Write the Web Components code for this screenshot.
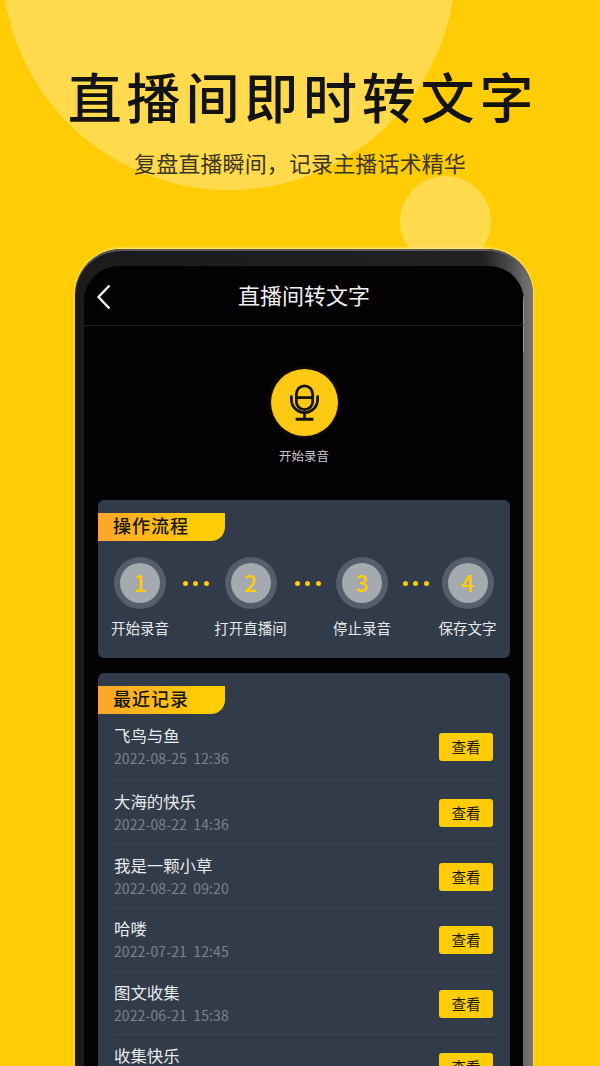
<!DOCTYPE html>
<html lang="zh-CN"><head><meta charset="utf-8"><title>直播间即时转文字</title>
<style>
html,body{margin:0;padding:0;height:1066px;overflow:hidden;background:#ffcc05}
body{font-family:"Noto Sans CJK SC","Noto Sans",sans-serif}
</style></head><body>
<promo-page>
  <span slot="headline">直播间即时转文字</span>
  <span slot="sub">复盘直播瞬间，记录主播话术精华</span>
  <phone-frame>
    <nav-bar>直播间转文字</nav-bar>
    <mic-button>开始录音</mic-button>
    <tag-card label="操作流程" style="height:158px">
      <flow-steps>
        <flow-step n="1">开始录音</flow-step>
        <step-dots style="width:58.5px;padding-left:1px;box-sizing:border-box"></step-dots>
        <flow-step n="2">打开直播间</flow-step>
        <step-dots style="width:59.5px;padding-left:3px;box-sizing:border-box"></step-dots>
        <flow-step n="3">停止录音</flow-step>
        <step-dots style="width:53.5px;padding-left:1.5px;box-sizing:border-box"></step-dots>
        <flow-step n="4">保存文字</flow-step>
      </flow-steps>
    </tag-card>
    <tag-card label="最近记录" style="margin-top:15px">
      <record-list>
        <record-row name="飞鸟与鱼" date="2022-08-25  12:36"></record-row>
        <record-row name="大海的快乐" date="2022-08-22  14:36"></record-row>
        <record-row name="我是一颗小草" date="2022-08-22  09:20"></record-row>
        <record-row name="哈喽" date="2022-07-21  12:45"></record-row>
        <record-row name="图文收集" date="2022-06-21  15:38"></record-row>
        <record-row name="收集快乐" date="2022-06-20  10:12"></record-row>
      </record-list>
    </tag-card>
  </phone-frame>
</promo-page>
<script>
function def(tag,html,init){
  customElements.define(tag,class extends HTMLElement{
    constructor(){super();this.attachShadow({mode:"open"}).innerHTML=html;}
    connectedCallback(){if(init)init(this,this.shadowRoot);}
  });
}
def("promo-page",`<style>
:host{display:block;position:relative;width:600px;height:1066px;overflow:hidden;background:#ffcc05;font-family:"Noto Sans CJK SC","Noto Sans",sans-serif}
.big,.small{position:absolute;border-radius:50%;background:#ffda4d}
.big{left:2px;top:-264px;width:454px;height:454px}
.small{left:400px;top:176px;width:91px;height:91px}
.hero{position:relative;height:249px;box-sizing:border-box;padding-top:64px;text-align:center}
h1{margin:0 0 0 6px;font-size:54px;line-height:64px;font-weight:500;letter-spacing:4.8px;color:#131313;white-space:nowrap}
p{margin:22px 0 0;font-size:22px;line-height:24px;font-weight:400;letter-spacing:.12px;color:#3a3524;white-space:nowrap}
.wrap{position:relative;padding:0 67px 0 75px}
</style>
<div class="big"></div><div class="small"></div>
<div class="hero"><h1><slot name="headline"></slot></h1><p><slot name="sub"></slot></p></div>
<div class="wrap"><slot></slot></div>`);
def("phone-frame",`<style>
:host{display:block;position:relative;height:817px;box-sizing:border-box;padding:17px 9px 0;border-radius:46px 46px 0 0;
 background:linear-gradient(to right,#1b1b1b 0,#212121 89%,#4b4b4d 95%,#68686c 98%,#77777a 100%);
 box-shadow:0 -1px 3px rgba(255,236,140,.95),inset 0 2px 0 #5a5a5a}
.screen{position:relative;height:100%;box-sizing:border-box;padding:0 14px;background:#030104;border-radius:35px 35px 0 0;overflow:hidden}
.bar{position:absolute;right:0;top:30px;width:1.5px;height:56px;background:#9a9a9e}
.bar2{position:absolute;right:0;top:86px;width:1.5px;height:730px;background:#6a6a6e}
</style><div class="screen"><div class="bar"></div><div class="bar2"></div><slot></slot></div>`);
def("nav-bar",`<style>
:host{display:block;position:relative;height:59px;margin:0 -14px;border-bottom:1px solid #1f1e21;color:#f0f0f0;text-align:center;font-size:22px;line-height:57px;font-weight:400}
svg{position:absolute;left:12px;top:18px}
</style><svg width="16" height="26" viewBox="0 0 16 26" fill="none" stroke="#f4f4f4" stroke-width="2.4"><path d="M13.5 1.5 L2.5 13 L13.5 24.5"/></svg><slot></slot>`);
def("mic-button",`<style>
:host{display:block;height:174px;box-sizing:border-box;padding-top:43px;text-align:center;color:#c9c9c9;font-size:12.5px;line-height:20px}
.c{display:block;width:67px;height:67px;margin:0 auto 10px;border-radius:50%;background:radial-gradient(circle,#fdc913 60%,#f9c30f 100%);box-shadow:0 0 5px rgba(120,90,0,.45)}
</style><svg class="c" viewBox="0 0 68 68" fill="none" stroke="#14120c" stroke-width="2.8"><rect x="25.7" y="17.2" width="16.6" height="24" rx="8.3"/><path d="M25.7 29H42.3"/><path d="M20.7 28v3a13.3 13.3 0 0 0 26.6 0v-3" stroke-linecap="round"/><path d="M34 44.3V51M25 51H43"/></svg><slot></slot>`);
def("tag-card",`<style>
:host{display:block;background:#323b49;border-radius:6px;padding-top:13px;box-sizing:border-box}
.tag{width:127px;height:28px;box-sizing:border-box;padding-left:15px;background:linear-gradient(to right,#ffa52c,#ffcd05 85%);border-radius:0 0 14px 0;color:#161616;font-size:18px;line-height:25.5px;font-weight:500;letter-spacing:1px;white-space:nowrap}
</style><div class="tag"></div><slot></slot>`,(h,s)=>{s.querySelector(".tag").textContent=h.getAttribute("label")});
def("flow-steps",`<style>
:host{display:flex;align-items:flex-start;padding:17px 0 0 16px}
</style><slot></slot>`);
def("flow-step",`<style>
:host{display:flex;flex:none;width:52px;flex-direction:column;align-items:center;color:#e6e8ea;font-size:14.5px;line-height:20px;white-space:nowrap}
.o{width:52px;height:52px;border-radius:50%;background:#575e6b;display:flex;align-items:center;justify-content:center;margin-bottom:9px;margin-top:-1px}
.i{width:40px;height:40px;border-radius:50%;background:#a5a9b0;color:#ffcc05;font:500 23px/38px "Noto Sans CJK SC","Noto Sans",sans-serif;text-align:center}
</style><div class="o"><div class="i"></div></div><slot></slot>`,(h,s)=>{s.querySelector(".i").textContent=h.getAttribute("n")});
def("step-dots",`<style>
:host{display:flex;flex:none;height:50px;align-items:center;justify-content:center;gap:5.5px}
i{width:5px;height:5px;border-radius:50%;background:#ffcc05}
</style><i></i><i></i><i></i>`);
def("record-list",`<style>:host{display:block;padding:1px 13px 0 16px}</style><slot></slot>`);
def("record-row",`<style>
:host{display:flex;align-items:center;justify-content:space-between;box-sizing:border-box;padding:9px 4px 7.5px 0;border-bottom:1px solid #3c4553}
:host(:first-child){padding-bottom:10px}
.n{color:#e9ebed;font-size:16.4px;line-height:22px}
.d{color:#7d828a;font-size:14px;letter-spacing:.1px;line-height:24px;white-space:pre}
.b{width:54px;height:28px;background:#ffcc05;border-radius:3px;color:#1c1a12;font-size:14.5px;line-height:28px;text-align:center}
</style><div><div class="n"></div><div class="d"></div></div><div class="b">查看</div>`,(h,s)=>{s.querySelector(".n").textContent=h.getAttribute("name");s.querySelector(".d").textContent=h.getAttribute("date")});
</script>
</body></html>
